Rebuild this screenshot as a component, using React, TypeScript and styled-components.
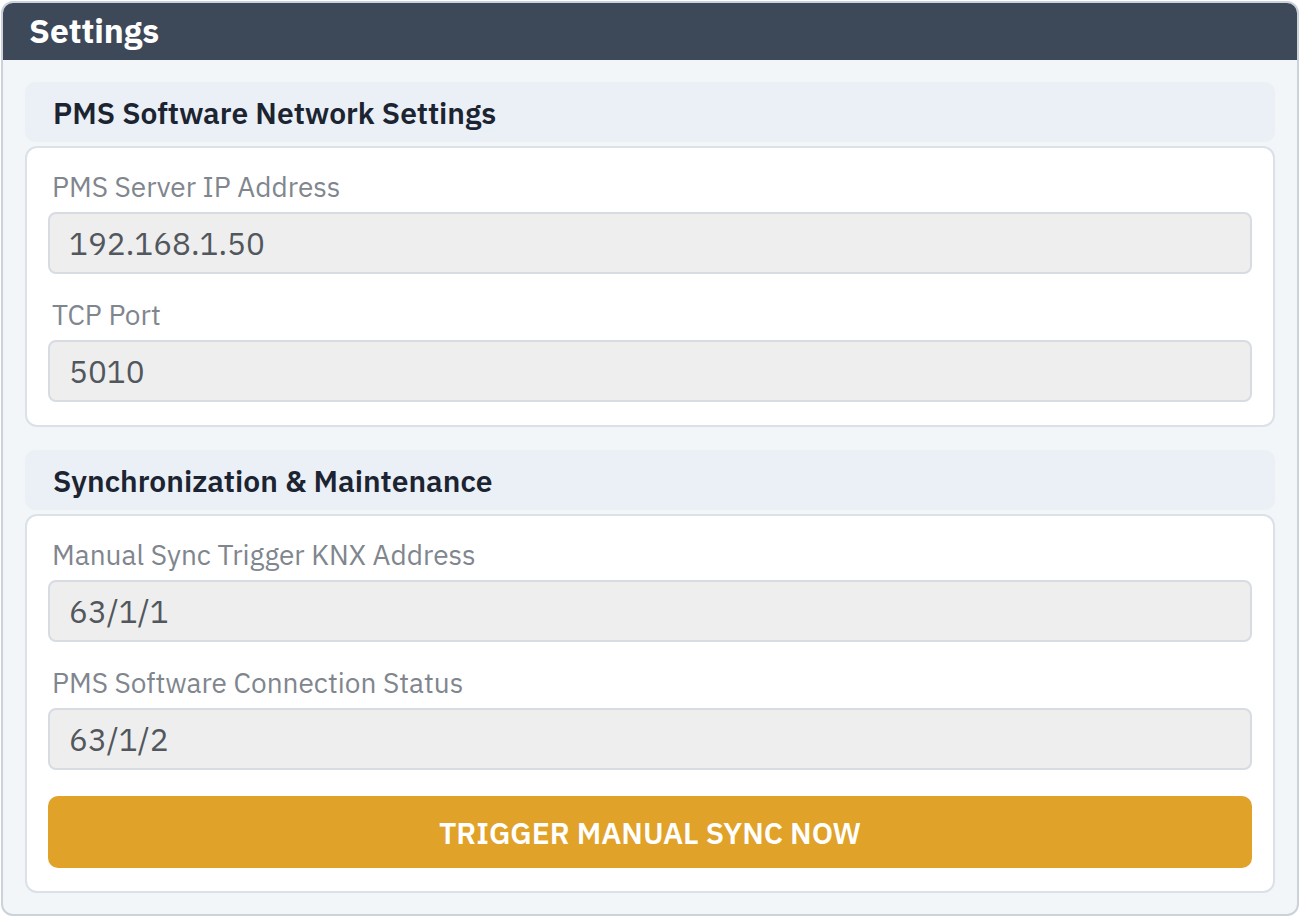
import { styled, createGlobalStyle } from "styled-components";

const GlobalStyle = createGlobalStyle`
  html, body {
    margin: 0;
    padding: 0;
    background: #ffffff;
  }
  body {
    font-family: "IBM Plex Sans", "Noto Sans", "Liberation Sans", sans-serif;
  }
  * {
    box-sizing: border-box;
  }
`;

interface FieldProps {
  label: string;
  value: string;
}

function Field({ label, value }: FieldProps) {
  return (
    <FieldWrap>
      <FieldLabel>{label}</FieldLabel>
      <FieldInput readOnly value={value} />
    </FieldWrap>
  );
}

export default function App() {
  return (
    <>
      <GlobalStyle />
      <Panel>
        <PanelHeader>Settings</PanelHeader>
        <PanelBody>
          <Section>
            <SectionTitle>PMS Software Network Settings</SectionTitle>
            <Card>
              <Field label="PMS Server IP Address" value="192.168.1.50" />
              <Field label="TCP Port" value="5010" />
            </Card>
          </Section>
          <Section>
            <SectionTitle>Synchronization &amp; Maintenance</SectionTitle>
            <Card>
              <Field label="Manual Sync Trigger KNX Address" value="63/1/1" />
              <Field label="PMS Software Connection Status" value="63/1/2" />
              <SyncButton>TRIGGER MANUAL SYNC NOW</SyncButton>
            </Card>
          </Section>
        </PanelBody>
      </Panel>
    </>
  );
}

const Panel = styled.div`
  margin: 1px 1px 0 1px;
  width: 1298px;
  border: 2px solid #cbd2da;
  border-radius: 12px;
  overflow: hidden;
  background: #f3f6f9;
`;

const PanelHeader = styled.h1`
  margin: 0;
  height: 57px;
  display: flex;
  align-items: center;
  padding: 0 26px 2px;
  background: #3d4858;
  color: #ffffff;
  font-size: 33.5px;
  font-weight: 700;
`;

const PanelBody = styled.div`
  display: flex;
  flex-direction: column;
  gap: 23px;
  padding: 22px 22px 21px;
`;

const Section = styled.section`
  display: flex;
  flex-direction: column;
  gap: 4px;
`;

const SectionTitle = styled.h2`
  margin: 0;
  height: 60px;
  display: flex;
  align-items: center;
  padding: 0 28px;
  background: #eaf0f6;
  border-radius: 10px;
  color: #1c2431;
  font-size: 30px;
  font-weight: 600;
`;

const Card = styled.div`
  display: flex;
  flex-direction: column;
  gap: 23px;
  padding: 21px 21px 23px;
  background: #ffffff;
  border: 2px solid #dbe1e8;
  border-radius: 12px;
`;

const FieldWrap = styled.div`
  display: flex;
  flex-direction: column;
  gap: 7px;
`;

const FieldLabel = styled.label`
  padding-left: 4px;
  line-height: 36px;
  font-size: 28px;
  color: #7f868e;
`;

const FieldInput = styled.input`
  height: 62px;
  width: 100%;
  padding: 0 19px;
  background: #eeeeee;
  border: 2px solid #d7dce2;
  border-radius: 8px;
  font-family: inherit;
  font-size: 31.5px;
  color: #52575d;
  outline: none;
`;

const SyncButton = styled.button`
  margin-top: 3px;
  height: 72px;
  width: 100%;
  border: none;
  border-radius: 10px;
  background: #e1a229;
  color: #ffffff;
  font-family: inherit;
  font-size: 30px;
  font-weight: 600;
  cursor: pointer;
`;
